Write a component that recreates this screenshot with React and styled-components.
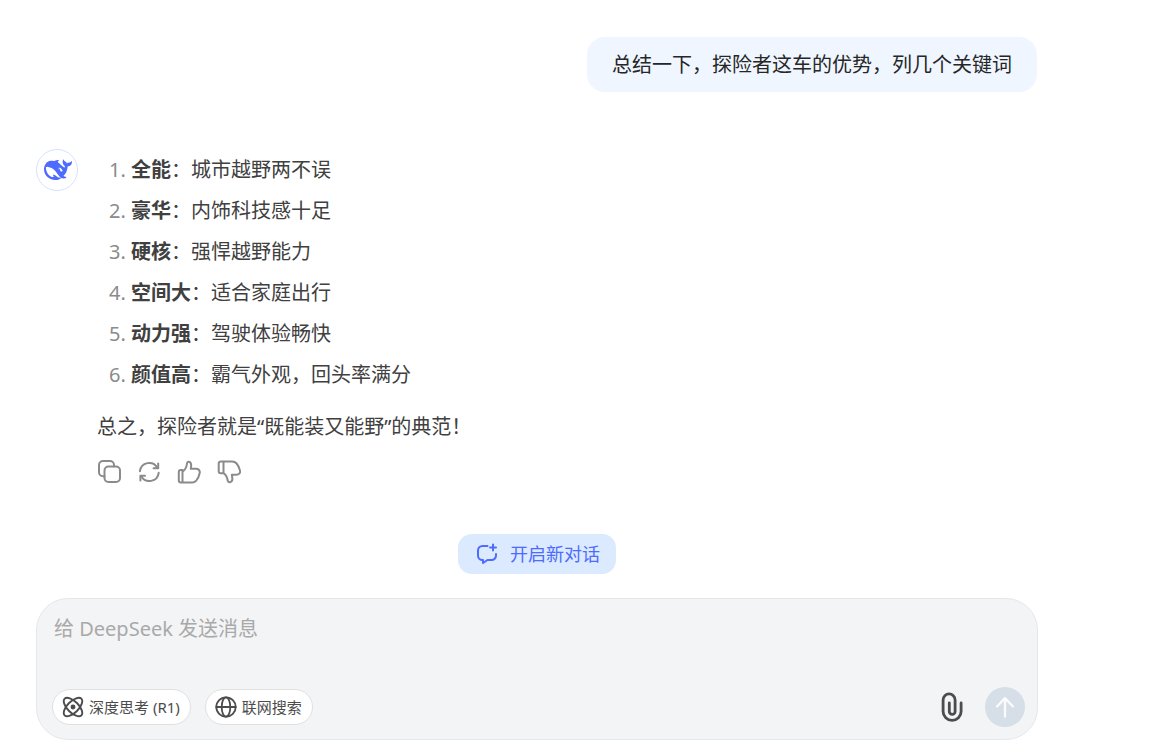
import React from "react";
import styled, { createGlobalStyle } from "styled-components";

const GlobalStyle = createGlobalStyle`
  * { box-sizing: border-box; }
  body {
    margin: 0;
    background: #fff;
    color: #404040;
    font-family: "Noto Sans", "Noto Sans CJK SC", sans-serif;
    font-size: 20px;
    line-height: 34px;
  }
  button, textarea { font: inherit; color: inherit; }
`;

const Page = styled.main`
  display: flex;
  flex-direction: column;
  padding: 37px 112px 6px 36px;
`;

const UserMessage = styled.div`
  align-self: flex-end;
  margin-right: 1px;
  padding: 11px 25px 10px;
  border-radius: 18px;
  background: #eff6ff;
  color: #262626;
`;

const Reply = styled.article`
  display: flex;
  align-items: flex-start;
  gap: 19px;
  margin-top: 57px;
`;

const Avatar = styled.div`
  display: flex;
  flex: none;
  align-items: center;
  justify-content: center;
  width: 42px;
  height: 42px;
  padding-left: 2px;
  border: 1px solid #d5e4ff;
  border-radius: 50%;
  color: #4d6bfe;
`;

const ReplyBody = styled.div`
  flex: 1;
  padding-top: 4px;
`;

const Keywords = styled.ol`
  display: flex;
  flex-direction: column;
  gap: 7px;
  margin: 0;
  padding-left: 34px;
`;

const Keyword = styled.li`
  &::marker { color: #8b8b8b; }
`;

const Summary = styled.p`
  margin: 18px 0 16px;
`;

const Actions = styled.div`
  display: flex;
  gap: 16px;
`;

const IconButton = styled.button`
  display: flex;
  padding: 0;
  border: 0;
  background: none;
  color: ${(p) => p.$color || "#8b8b8b"};
  cursor: pointer;
`;

const NewChatButton = styled.button`
  display: flex;
  align-self: center;
  align-items: center;
  gap: 12px;
  height: 40px;
  margin: 50px 0 24px;
  padding: 0 16px 0 18px;
  border: 0;
  border-radius: 14px;
  background: #dbeafe;
  color: #4d6bfe;
  font-size: 18px;
  cursor: pointer;
`;

const Composer = styled.form`
  display: flex;
  flex-direction: column;
  padding: 13px 12px 12px 15px;
  border: 1px solid #e5e7ee;
  border-radius: 32px;
  background: #f3f4f6;
`;

const MessageInput = styled.textarea`
  display: block;
  width: 100%;
  height: 75px;
  padding: 0 2px;
  border: 0;
  outline: 0;
  resize: none;
  background: transparent;
  &::placeholder { color: #a9a9a9; opacity: 1; }
`;

const Toolbar = styled.div`
  display: flex;
  align-items: center;
  gap: 14px;
`;

const ModeButton = styled.button`
  display: flex;
  align-items: center;
  gap: 5px;
  height: 36px;
  padding: 0 10px 0 9px;
  border: 1px solid #dfe0e2;
  border-radius: 18px;
  background: #fff;
  color: #4c4c4c;
  font-size: 15px;
  cursor: pointer;
`;

const SendTools = styled.div`
  display: flex;
  align-items: center;
  gap: 22px;
  margin-left: auto;
`;

const SendButton = styled.button`
  display: flex;
  align-items: center;
  justify-content: center;
  width: 40px;
  height: 40px;
  padding: 0;
  border: 0;
  border-radius: 50%;
  background: #d6dee8;
  color: #fafbfc;
`;

const Icon = ({ size = 24, width, box = "0 0 24 24", stroke = 2, children }) => (
  <svg
    width={width || size}
    height={size}
    viewBox={box}
    fill="none"
    stroke="currentColor"
    strokeWidth={stroke}
    strokeLinecap="round"
    strokeLinejoin="round"
    aria-hidden="true"
  >
    {children}
  </svg>
);

const WhaleLogo = () => (
  <svg width="28" height="28" viewBox="0 0 24 24" fill="currentColor" aria-hidden="true">
    <path d="M23.748 4.482c-.254-.124-.364.113-.512.234-.051.039-.094.09-.137.136-.372.397-.806.657-1.373.626-.829-.046-1.537.214-2.163.848-.133-.782-.575-1.248-1.247-1.548-.352-.156-.708-.311-.955-.65-.172-.241-.219-.51-.305-.774-.055-.16-.11-.323-.293-.35-.2-.031-.278.136-.356.276-.313.572-.434 1.202-.422 1.84.027 1.436.633 2.58 1.838 3.393.137.093.172.187.129.323-.082.28-.18.552-.266.833-.055.179-.137.217-.329.14a5.526 5.526 0 01-1.736-1.18c-.857-.828-1.631-1.742-2.597-2.458a11.365 11.365 0 00-.689-.471c-.985-.957.13-1.743.388-1.836.27-.098.093-.432-.779-.428-.872.004-1.67.295-2.687.684a3.055 3.055 0 01-.465.137 9.597 9.597 0 00-2.883-.102c-1.885.21-3.39 1.102-4.497 2.623C.082 8.606-.231 10.684.152 12.85c.403 2.284 1.569 4.175 3.36 5.653 1.858 1.533 3.997 2.284 6.438 2.14 1.482-.085 3.133-.284 4.994-1.86.47.234.962.327 1.78.397.63.059 1.236-.03 1.705-.128.735-.156.684-.837.419-.961-2.155-1.004-1.682-.595-2.113-.926 1.096-1.296 2.746-2.642 3.392-7.003.05-.347.007-.565 0-.845-.004-.17.035-.237.23-.256a4.173 4.173 0 001.545-.475c1.396-.763 1.96-2.015 2.093-3.517.02-.23-.004-.467-.247-.588zM11.581 18c-2.089-1.642-3.102-2.183-3.52-2.16-.392.024-.321.471-.235.763.09.288.207.486.371.739.114.167.192.416-.113.603-.673.416-1.842-.14-1.897-.167-1.361-.802-2.5-1.86-3.301-3.307-.774-1.393-1.224-2.887-1.298-4.482-.02-.386.093-.522.477-.592a4.696 4.696 0 011.529-.039c2.132.312 3.946 1.265 5.468 2.774.868.86 1.525 1.887 2.202 2.891.72 1.066 1.494 2.082 2.48 2.914.348.292.625.514.891.677-.802.09-2.14.11-3.054-.614zm1-6.44a.306.306 0 01.415-.287.302.302 0 01.2.288.306.306 0 01-.31.307.303.303 0 01-.304-.308zm3.11 1.596c-.2.081-.399.151-.59.16a1.245 1.245 0 01-.798-.254c-.274-.23-.47-.358-.552-.758a1.73 1.73 0 01.016-.588c.07-.327-.008-.537-.239-.727-.187-.156-.426-.199-.688-.199a.559.559 0 01-.254-.078c-.11-.054-.2-.19-.114-.358.028-.054.16-.186.192-.21.356-.202.767-.136 1.146.016.352.144.618.408 1.001.782.391.451.462.576.685.914.176.265.336.537.445.848.067.195-.019.354-.25.452z" />
  </svg>
);

const CopyIcon = () => (
  <Icon>
    <rect x="7.5" y="6.5" width="15.5" height="15.5" rx="4" />
    <path d="M7.5 16.2H6a4 4 0 0 1-4-4V5a4 4 0 0 1 4-4h7a4 4 0 0 1 4 4v1.5" />
  </Icon>
);

const RefreshIcon = () => (
  <Icon>
    <path d="M2.9 11.2a9.3 9.3 0 0 1 17.4-3.4M21.7 12.8a9.3 9.3 0 0 1-17.4 3.4" />
    <path d="M21.2 3.4v4.8h-4.6M3.4 20.6v-4.8H8" />
  </Icon>
);

const LikeIcon = () => (
  <Icon>
    <path d="M5.500 10H3.800a2 2 0 0 0-2 2v8.500a2 2 0 0 0 2 2h1.700zM5.500 11.500c3-1.500 4-4 4.500-8 .3-1.500 1-2 2-1.700 2 .5 2.300 2.300 2.100 4.200L13.800 8.800h5.200c2.500 0 4.200 1.700 3.700 4.200-.6 3-1.700 5.700-3.500 7.600-1.200 1.400-2.500 1.900-4.200 1.900H5.500" />
  </Icon>
);

const DislikeIcon = () => (
  <Icon>
    <path d="M6.500 1.500H4a2.300 2.300 0 0 0-2.300 2.300v7.400a2 2 0 0 0 2 2h2.800zM6.500 1.500H15c2 0 3.400.6 4.600 2 1.800 2.100 2.800 4.400 3.400 7.100.5 2.500-1.100 4.100-3.600 4.100h-4.600l.5 3.300c.3 2-.4 3.700-2.300 4.200-1.200.3-2-.3-2.300-1.600-.7-3.800-1.700-6-4.200-7.400" />
  </Icon>
);

const NewChatIcon = () => (
  <Icon size={22} box="0 0 22 22">
    <path d="M11.500 3H6.500a4.500 4.500 0 0 0-4.500 4.500v5A4.500 4.500 0 0 0 6.500 17H7v3l4.500-3h4a4.500 4.500 0 0 0 4.500-4.500V11" />
    <path d="M17 1.500v6M14 4.500h6" />
  </Icon>
);

const ThinkIcon = () => (
  <Icon size={22} box="0 0 22 22" stroke={1.9}>
    <ellipse cx="11" cy="11" rx="11.800" ry="5.600" transform="rotate(45 11 11)" />
    <ellipse cx="11" cy="11" rx="11.800" ry="5.600" transform="rotate(-45 11 11)" />
    <circle cx="11" cy="11" r="1.500" fill="currentColor" />
  </Icon>
);

const GlobeIcon = () => (
  <Icon size={22} box="0 0 22 22" stroke={1.8}>
    <circle cx="11" cy="11" r="9.700" />
    <ellipse cx="11" cy="11" rx="4.300" ry="9.700" />
    <path d="M1.300 11h19.400" />
  </Icon>
);

const ClipIcon = () => (
  <Icon width={22} size={30} box="0 0 22 30" stroke={2.8}>
    <path d="M8.300 11v8.500a2.900 2.900 0 0 0 5.800 0V7.900a6 6 0 0 0-12 0v11.500a9 9 0 0 0 18 0V11" />
  </Icon>
);

const SendIcon = () => (
  <Icon size={24} stroke={2.4}>
    <path d="M12 21.500V3.500M4 11.500l8-8.300 8 8.300" />
  </Icon>
);

const keywords = [
  ["全能", "城市越野两不误"],
  ["豪华", "内饰科技感十足"],
  ["硬核", "强悍越野能力"],
  ["空间大", "适合家庭出行"],
  ["动力强", "驾驶体验畅快"],
  ["颜值高", "霸气外观，回头率满分"],
];

export default function App() {
  return (
    <>
      <GlobalStyle />
      <Page lang="zh-CN">
        <UserMessage>总结一下，探险者这车的优势，列几个关键词</UserMessage>
        <Reply>
          <Avatar>
            <WhaleLogo />
          </Avatar>
          <ReplyBody>
            <Keywords>
              {keywords.map(([name, text]) => (
                <Keyword key={name}>
                  <strong>{name}</strong>：{text}
                </Keyword>
              ))}
            </Keywords>
            <Summary>总之，探险者就是“既能装又能野”的典范！</Summary>
            <Actions>
              <IconButton aria-label="复制"><CopyIcon /></IconButton>
              <IconButton aria-label="重新生成"><RefreshIcon /></IconButton>
              <IconButton aria-label="喜欢"><LikeIcon /></IconButton>
              <IconButton aria-label="不喜欢"><DislikeIcon /></IconButton>
            </Actions>
          </ReplyBody>
        </Reply>
        <NewChatButton>
          <NewChatIcon />
          开启新对话
        </NewChatButton>
        <Composer onSubmit={(e) => e.preventDefault()}>
          <MessageInput aria-label="消息" placeholder="给 DeepSeek 发送消息" />
          <Toolbar>
            <ModeButton type="button">
              <ThinkIcon />
              深度思考 (R1)
            </ModeButton>
            <ModeButton type="button">
              <GlobeIcon />
              联网搜索
            </ModeButton>
            <SendTools>
              <IconButton type="button" $color="#4c4c4c" aria-label="上传附件"><ClipIcon /></IconButton>
              <SendButton aria-label="发送"><SendIcon /></SendButton>
            </SendTools>
          </Toolbar>
        </Composer>
      </Page>
    </>
  );
}
